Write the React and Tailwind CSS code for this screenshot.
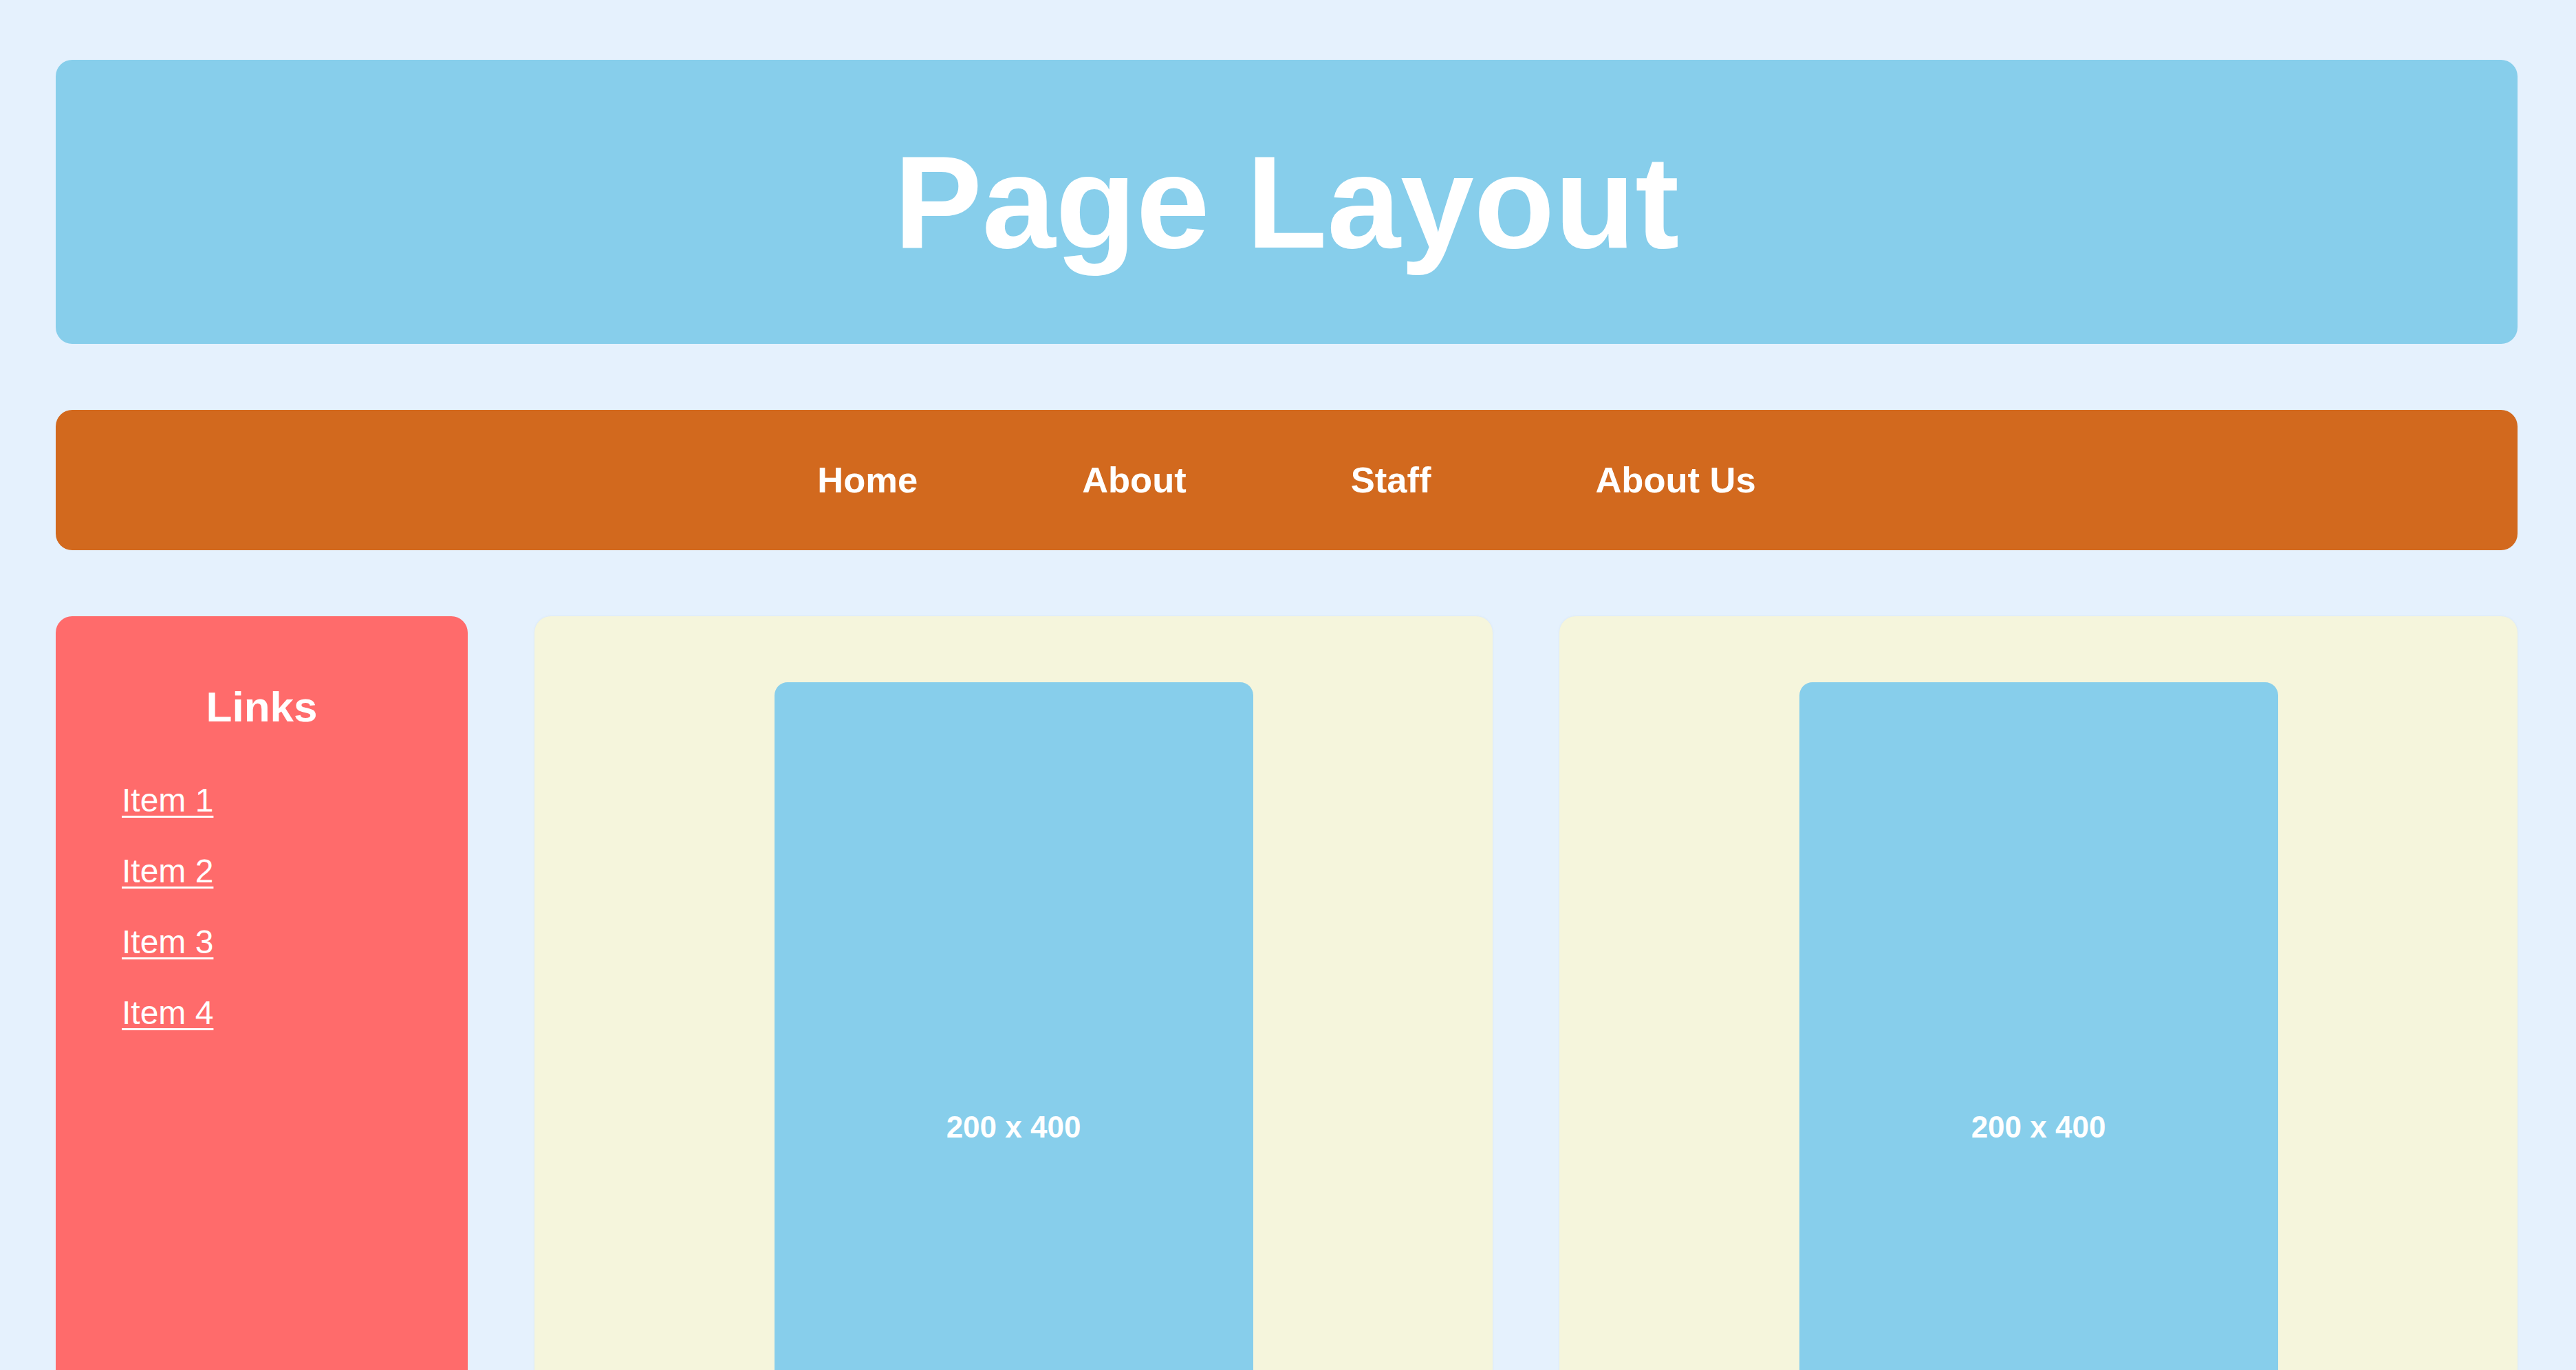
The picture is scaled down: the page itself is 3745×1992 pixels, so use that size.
export default function App() {
  const navItems = ["Home", "About", "Staff", "About Us"];
  const items = ["Item 1", "Item 2", "Item 3", "Item 4"];
  return (
    <div
      className="min-h-screen bg-[#e5f1fd] pt-[87px] pl-[81px] pr-[85px] pb-[96px]"
      style={{ fontFamily: '"Liberation Sans", Arial, sans-serif' }}
    >
      <header className="h-[413px] rounded-[24px] bg-[#87ceeb] flex items-center justify-center">
        <h1 className="text-[192px] font-bold text-white leading-none">Page Layout</h1>
      </header>

      <nav className="mt-[96px] h-[204px] rounded-[24px] bg-[#d2691e] flex items-center justify-center gap-[239px]">
        {navItems.map((n) => (
          <a key={n} href="#" className="text-[52.5px] font-bold text-white leading-none">
            {n}
          </a>
        ))}
      </nav>

      <main className="mt-[96px] flex gap-[97px] items-stretch">
        <aside className="w-[599px] shrink-0 rounded-[24px] bg-[#ff6b6b] pt-[96px] px-[96px]">
          <h2 className="text-[62px] font-bold text-white text-center leading-[71px]">Links</h2>
          <ul className="mt-[73px] flex flex-col gap-[48px]">
            {items.map((i) => (
              <li key={i} className="text-[48px] leading-[55px]">
                <a href="#" className="text-white underline decoration-[3px] underline-offset-[6px]">
                  {i}
                </a>
              </li>
            ))}
          </ul>
        </aside>

        {[0, 1].map((k) => (
          <section
            key={k}
            className="flex-1 rounded-[24px] bg-[#f5f5dc] pt-[96px] pb-[96px] shadow-[0_0_3px_rgba(150,170,200,0.18)]"
          >
            <div className="mx-auto w-[696px] h-[1294px] rounded-[19px] bg-[#87ceeb] flex items-center justify-center">
              <span className="text-[44px] font-bold text-white">200 x 400</span>
            </div>
          </section>
        ))}
      </main>
    </div>
  );
}
